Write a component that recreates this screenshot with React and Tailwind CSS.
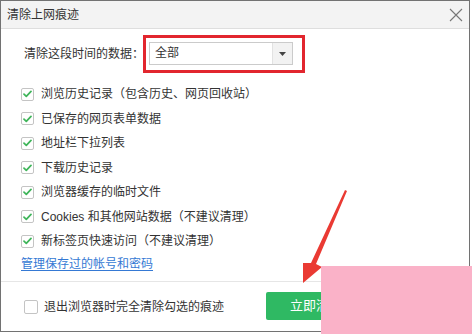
import React from 'react'

const ITEMS = [
  '浏览历史记录（包含历史、网页回收站）',
  '已保存的网页表单数据',
  '地址栏下拉列表',
  '下载历史记录',
  '浏览器缓存的临时文件',
  'Cookies 和其他网站数据（不建议清理）',
  '新标签页快速访问（不建议清理）',
]

function CheckBox({ checked, size = 'w-[13px] h-[13px]' }) {
  return (
    <span className={`${size} shrink-0 rounded-[2px] border border-[#c4c4c4] bg-white flex items-center justify-center`}>
      {checked && (
        <svg width="9" height="8" viewBox="0 0 9 8" fill="none">
          <path d="M1 4.2l2.3 2.2L8 1.4" stroke="#3fb55a" strokeWidth="1.7" strokeLinecap="round" strokeLinejoin="round" />
        </svg>
      )}
    </span>
  )
}

export default function App() {
  return (
    <div
      className="relative w-[472px] h-[334px] bg-white overflow-hidden text-[#333]"
      style={{ fontFamily: '"Liberation Sans", "Noto Sans CJK SC", sans-serif' }}
    >
      <div className="w-[470px] h-[332px] border border-[#727272] flex flex-col">
        {/* Title bar */}
        <div className="h-[28px] shrink-0 bg-[#f3f3f3] border-b border-[#dedede] flex items-center justify-between pl-[6px] pr-[6px]">
          <span className="text-[12px] leading-none">清除上网痕迹</span>
          <svg width="14" height="14" viewBox="0 0 14 14" className="mt-[1px]">
            <path d="M1 1l12 12M13 1L1 13" stroke="#777" strokeWidth="1.1" />
          </svg>
        </div>

        {/* Body */}
        <div className="flex-1 flex flex-col">
          <div className="flex items-center pl-[23px] pt-[6px]">
            <span className="text-[12px] w-[119px] whitespace-nowrap">清除这段时间的数据：</span>
            <div className="border-[3px] border-[#e2262e] pl-[3px] pt-[4px] pb-[5px] pr-[9px]">
              <div className="w-[144px] h-[23px] border border-[#cbcbcb] flex">
                <span className="flex-1 pl-[5px] text-[12px] leading-[21px]">全部</span>
                <span className="w-[20px] bg-[#f2f2f2] border-l border-[#e2e2e2] flex items-center justify-center">
                  <svg width="7" height="4" viewBox="0 0 7 4">
                    <path d="M0 0h7L3.5 4z" fill="#444" />
                  </svg>
                </span>
              </div>
            </div>
          </div>

          <div className="flex flex-col pl-[20px] mt-[9px]">
            {ITEMS.map(label => (
              <div key={label} className="h-[24.5px] flex items-center gap-[7px]">
                <CheckBox checked />
                <span className="text-[12px] leading-none">{label}</span>
              </div>
            ))}
            <a className="h-[21px] flex items-center text-[12px] text-[#3579d4] underline underline-offset-2">
              管理保存过的帐号和密码
            </a>
          </div>

          <div className="mt-auto h-[50px] border-t border-[#e6e6e6] flex items-center pl-[23px]">
            <CheckBox size="w-[14px] h-[14px]" />
            <span className="ml-[6px] text-[12px]">退出浏览器时完全清除勾选的痕迹</span>
            <button className="ml-[42px] w-[100px] h-[28px] rounded-[2px] bg-[#2fb963] text-white text-[13px] mb-[1px]">
              立即清理
            </button>
          </div>
        </div>
      </div>

      {/* Annotation arrow */}
      <svg className="absolute left-0 top-0" width="472" height="334" viewBox="0 0 472 334">
        <polygon points="345,190 347,191 316,264 322,267 303,283 303,263 311,263" fill="#ea3a33" />
      </svg>

      {/* Pink mask */}
      <div className="absolute left-[321px] top-[266px] w-[151px] h-[68px] bg-[#fab2c8]" />
    </div>
  )
}
